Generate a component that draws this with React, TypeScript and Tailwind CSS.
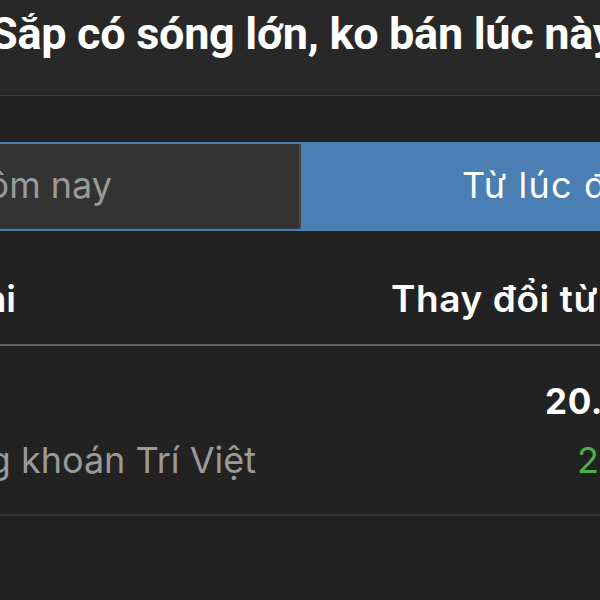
const title = { fontFamily: "Roboto, 'Noto Sans', sans-serif" };
const body = { fontFamily: "Inter, 'Noto Sans', sans-serif" };

export default function App() {
  return (
    <div className="w-[600px] h-[600px] overflow-hidden bg-[#222222] text-white" style={body}>
      {/* nav title */}
      <div className="h-[96px] bg-[#282828] border-b border-[#3a3a3a] overflow-hidden">
        <div className="-ml-[10px] pt-[6px] whitespace-nowrap text-[45px] font-bold leading-[56px] tracking-[-0.3px]" style={title}>
          Sắp có sóng lớn, ko bán lúc này
        </div>
      </div>

      {/* segmented control */}
      <div className="mt-[45px] border-t border-[#1b1f23]">
        <div className="flex h-[89px] border-y-2 border-[#4a7fb3] bg-[#4a7fb3]">
          <div className="w-[301px] flex items-center justify-end pr-[187px] pb-[3px] bg-[#333333] border-r-2 border-[#464646] overflow-hidden whitespace-nowrap">
            <span className="text-[36px] text-[#9a9a9a]">Hôm nay</span>
          </div>
          <div className="flex-1 flex items-center pl-[161px] pb-[3px] overflow-hidden whitespace-nowrap">
            <span className="text-[36px] text-white tracking-[1.2px]">Từ lúc đầu</span>
          </div>
        </div>
      </div>

      {/* table header */}
      <div className="h-[115px] pt-[46px] grid grid-cols-[391px_1fr] border-b-2 border-[#626262] whitespace-nowrap overflow-hidden">
        <div className="w-[16px] flex justify-end">
          <span className="text-[37px] leading-[44px] font-semibold">Chi</span>
        </div>
        <span className="text-[37px] leading-[44px] font-semibold tracking-[0.6px]">Thay đổi từ đầu</span>
      </div>

      {/* row */}
      <div className="h-[170px] grid grid-cols-[545px_1fr] border-b-2 border-[#333333] whitespace-nowrap overflow-hidden">
        <div className="w-[256px] pt-[92px] flex justify-end">
          <span className="text-[36px] leading-[44px] text-[#9a9a9a]">Công ty Chứng khoán Trí Việt</span>
        </div>
        <div className="flex flex-col items-start pt-[35px]">
          <span className="text-[35px] leading-[40px] font-bold tracking-[0.6px]">20.15%</span>
          <span className="mt-[17px] pl-[32px] text-[36px] leading-[44px] text-[#4cb04a]">25.000</span>
        </div>
      </div>
    </div>
  );
}
